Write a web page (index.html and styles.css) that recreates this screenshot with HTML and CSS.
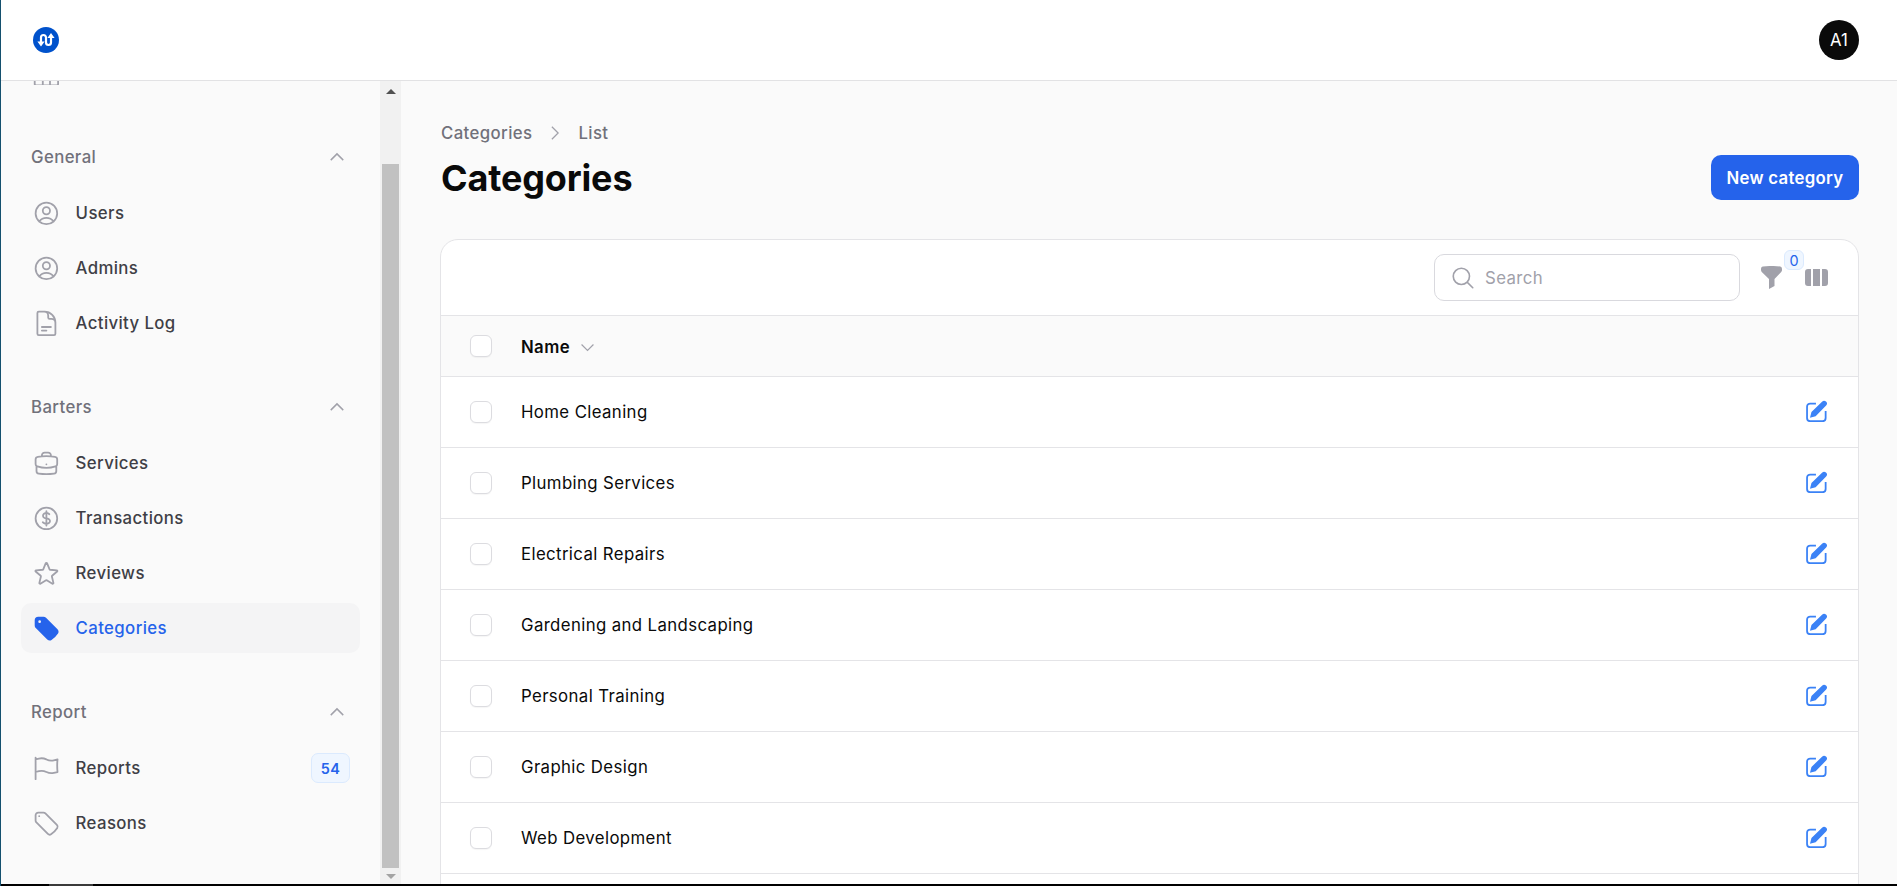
FILE: index.html
```html
<!DOCTYPE html>
<html lang="en">
<head>
  <meta charset="UTF-8" />
  <meta name="viewport" content="width=device-width, initial-scale=1.0" />
  <title>Categories</title>
  <link rel="stylesheet" href="styles.css">
</head>
<body>
  <svg class="sprite" aria-hidden="true">
    <symbol id="i-user" viewBox="0 0 24 24"><path d="M17.982 18.725A7.488 7.488 0 0 0 12 15.75a7.488 7.488 0 0 0-5.982 2.975m11.963 0a9 9 0 1 0-11.963 0m11.963 0A8.966 8.966 0 0 1 12 21a8.966 8.966 0 0 1-5.982-2.275M15 9.75a3 3 0 1 1-6 0 3 3 0 0 1 6 0Z"/></symbol>
    <symbol id="i-chevron" viewBox="0 0 24 24"><path d="m4.5 15.75 7.5-7.5 7.5 7.5"/></symbol>
    <symbol id="i-edit" viewBox="0 0 21 21">
      <path class="edit-box" d="M9.5 3.4H4a3 3 0 0 0-3 3v10.85a3 3 0 0 0 3 3h11.75a3 3 0 0 0 3-3V10.5"/>
      <path d="M3.8 17 5.2 11.4 15.3 1.6a2.6 2.6 0 0 1 3.9 3.7L9.2 15.4Z"/>
    </symbol>
  </svg>

  <div class="app">
    <header class="topbar">
      <svg class="logo" viewBox="0 0 26 26">
        <circle cx="13" cy="13" r="13" fill="#0052cc"/>
        <path d="M8 16V10.5a2.5 2.5 0 0 1 5 0v5a2.5 2.5 0 0 0 5 0V9.5" fill="none" stroke="#fff" stroke-width="2.2"/>
        <path d="M4.4 14.5h7.2L8 19.5ZM14.4 11h7.2L18 6Z" fill="#fff"/>
      </svg>
      <div class="avatar">A1</div>
    </header>

    <div class="layout">
      <aside class="sidebar">
        <nav class="sidenav">
          <div class="peek">
            <svg class="icon peek-icon" viewBox="0 0 24 24"><path d="M3.375 19.5h17.25c.621 0 1.125-.504 1.125-1.125v-3M2.25 15.375v3c0 .621.504 1.125 1.125 1.125M9 15v4.5M15 15v4.5"/></svg>
          </div>

          <div class="group">
            <div class="group-label">General
              <svg class="chevron"><use href="#i-chevron"/></svg>
            </div>
            <a class="item"><svg class="icon"><use href="#i-user"/></svg>Users</a>
            <a class="item"><svg class="icon"><use href="#i-user"/></svg>Admins</a>
            <a class="item">
              <svg class="icon" viewBox="0 0 24 24"><path d="M19.5 14.25v-2.625a3.375 3.375 0 0 0-3.375-3.375h-1.5A1.125 1.125 0 0 1 13.5 7.125v-1.5a3.375 3.375 0 0 0-3.375-3.375H8.25m0 12.75h7.5m-7.5 3H12M10.5 2.25H5.625c-.621 0-1.125.504-1.125 1.125v17.25c0 .621.504 1.125 1.125 1.125h12.75c.621 0 1.125-.504 1.125-1.125V11.25a9 9 0 0 0-9-9Z"/></svg>
              Activity Log
            </a>
          </div>

          <div class="group">
            <div class="group-label">Barters
              <svg class="chevron"><use href="#i-chevron"/></svg>
            </div>
            <a class="item">
              <svg class="icon" viewBox="0 0 24 24"><path d="M20.25 14.15v4.25c0 1.094-.787 2.036-1.872 2.18-2.087.277-4.216.42-6.378.42s-4.291-.143-6.378-.42c-1.085-.144-1.872-1.086-1.872-2.18v-4.25m16.5 0a2.18 2.18 0 0 0 .75-1.661V8.706c0-1.081-.768-2.015-1.837-2.175a48.114 48.114 0 0 0-3.413-.387m4.5 8.006c-.194.165-.42.295-.673.38A23.978 23.978 0 0 1 12 15.75c-2.648 0-5.195-.429-7.577-1.22a2.016 2.016 0 0 1-.673-.38m0 0A2.18 2.18 0 0 1 3 12.489V8.706c0-1.081.768-2.015 1.837-2.175a48.111 48.111 0 0 1 3.413-.387m7.5 0V5.25A2.25 2.25 0 0 0 13.5 3h-3a2.25 2.25 0 0 0-2.25 2.25v.894m7.5 0a48.667 48.667 0 0 0-7.5 0M12 12.75h.008v.008H12v-.008Z"/></svg>
              Services
            </a>
            <a class="item">
              <svg class="icon" viewBox="0 0 24 24"><path d="M12 6v12m-3-2.818.879.659c1.171.879 3.07.879 4.242 0 1.172-.879 1.172-2.303 0-3.182C13.536 12.219 12.768 12 12 12c-.725 0-1.45-.22-2.003-.659-1.106-.879-1.106-2.303 0-3.182s2.9-.879 4.006 0l.415.33M21 12a9 9 0 1 1-18 0 9 9 0 0 1 18 0Z"/></svg>
              Transactions
            </a>
            <a class="item">
              <svg class="icon" viewBox="0 0 24 24"><path d="M11.48 3.499a.562.562 0 0 1 1.04 0l2.125 5.111a.563.563 0 0 0 .475.345l5.518.442c.499.04.701.663.321.988l-4.204 3.602a.563.563 0 0 0-.182.557l1.285 5.385a.562.562 0 0 1-.84.61l-4.725-2.885a.562.562 0 0 0-.586 0L6.982 20.54a.562.562 0 0 1-.84-.61l1.285-5.386a.562.562 0 0 0-.182-.557l-4.204-3.602a.562.562 0 0 1 .321-.988l5.518-.442a.563.563 0 0 0 .475-.345L11.48 3.5Z"/></svg>
              Reviews
            </a>
            <a class="item active">
              <svg class="icon solid" viewBox="0 0 24 24"><path fill-rule="evenodd" clip-rule="evenodd" d="M5.25 2.25a3 3 0 0 0-3 3v4.318a3 3 0 0 0 .879 2.121l9.58 9.581c.92.92 2.39 1.186 3.548.428a18.849 18.849 0 0 0 5.441-5.44c.758-1.16.492-2.629-.428-3.548l-9.58-9.581a3 3 0 0 0-2.122-.879H5.25ZM6.375 7.5a1.125 1.125 0 1 0 0-2.25 1.125 1.125 0 0 0 0 2.25Z"/></svg>
              Categories
            </a>
          </div>

          <div class="group">
            <div class="group-label">Report
              <svg class="chevron"><use href="#i-chevron"/></svg>
            </div>
            <a class="item">
              <svg class="icon" viewBox="0 0 24 24"><path d="M3 3v1.5M3 21v-6m0 0 2.77-.693a9 9 0 0 1 6.208.682l.108.054a9 9 0 0 0 6.086.71l3.114-.732a48.524 48.524 0 0 1-.005-10.499l-3.11.732a9 9 0 0 1-6.085-.711l-.108-.054a9 9 0 0 0-6.208-.682L3 4.5M3 15V4.5"/></svg>
              Reports
              <span class="count">54</span>
            </a>
            <a class="item">
              <svg class="icon" viewBox="0 0 24 24"><path d="M9.568 3H5.25A2.25 2.25 0 0 0 3 5.25v4.318c0 .597.237 1.17.659 1.591l9.581 9.581c.699.699 1.78.872 2.607.33a18.095 18.095 0 0 0 5.223-5.223c.542-.827.369-1.908-.33-2.607L11.16 3.66A2.25 2.25 0 0 0 9.568 3Z"/><path d="M6 6h.008v.008H6V6Z"/></svg>
              Reasons
            </a>
          </div>
        </nav>

        <div class="scrollbar">
          <span class="arrow up"></span>
          <div class="thumb"></div>
          <span class="arrow down"></span>
        </div>
      </aside>

      <main class="content">
        <div class="breadcrumbs">
          <span>Categories</span>
          <svg class="crumb-sep" viewBox="0 0 24 24"><path d="m8.25 4.5 7.5 7.5-7.5 7.5"/></svg>
          <span>List</span>
        </div>

        <div class="page-head">
          <h1>Categories</h1>
          <a class="btn-primary">New category</a>
        </div>

        <section class="card">
          <div class="toolbar">
            <label class="search">
              <svg class="search-icon" viewBox="0 0 24 24"><path d="m21 21-5.197-5.197m0 0A7.5 7.5 0 1 0 5.196 5.196a7.5 7.5 0 0 0 10.607 10.607Z"/></svg>
              <input type="text" placeholder="Search">
            </label>
            <div class="filter">
              <svg class="filter-icon" viewBox="0 0 21 23"><path d="M2 .5C7-.2 14-.2 19 .5c1.4.2 2 1.3 2 2.5v1c0 1-.5 1.6-1 2.2L13.5 13v7L8 23V13L1 6.2C.4 5.6 0 5 0 4V3C0 1.8.6.7 2 .5Z"/></svg>
              <span class="filter-count">0</span>
            </div>
            <svg class="columns-icon" viewBox="0 0 23 17"><path d="M8 0h7v17H8ZM17 0h3a3 3 0 0 1 3 3v11a3 3 0 0 1-3 3h-3ZM3 0h3v17H3a3 3 0 0 1-3-3V3a3 3 0 0 1 3-3Z"/></svg>
          </div>

          <table class="grid">
            <thead>
              <tr>
                <th class="col-check"><span class="check"></span></th>
                <th>
                  <span class="sort">Name
                    <svg class="sort-icon" viewBox="0 0 24 24"><path d="m19.5 8.25-7.5 7.5-7.5-7.5"/></svg>
                  </span>
                </th>
                <th class="col-action"></th>
              </tr>
            </thead>
            <tbody>
              <tr><td class="col-check"><span class="check"></span></td><td>Home Cleaning</td><td class="col-action"><svg class="edit"><use href="#i-edit"/></svg></td></tr>
              <tr><td class="col-check"><span class="check"></span></td><td>Plumbing Services</td><td class="col-action"><svg class="edit"><use href="#i-edit"/></svg></td></tr>
              <tr><td class="col-check"><span class="check"></span></td><td>Electrical Repairs</td><td class="col-action"><svg class="edit"><use href="#i-edit"/></svg></td></tr>
              <tr><td class="col-check"><span class="check"></span></td><td>Gardening and Landscaping</td><td class="col-action"><svg class="edit"><use href="#i-edit"/></svg></td></tr>
              <tr><td class="col-check"><span class="check"></span></td><td>Personal Training</td><td class="col-action"><svg class="edit"><use href="#i-edit"/></svg></td></tr>
              <tr><td class="col-check"><span class="check"></span></td><td>Graphic Design</td><td class="col-action"><svg class="edit"><use href="#i-edit"/></svg></td></tr>
              <tr><td class="col-check"><span class="check"></span></td><td>Web Development</td><td class="col-action"><svg class="edit"><use href="#i-edit"/></svg></td></tr>
              <tr class="cut-off"><td class="col-check"></td><td></td><td class="col-action"></td></tr>
            </tbody>
          </table>
        </section>
      </main>
    </div>

    <div class="window-edge"><span></span></div>
  </div>
</body>
</html>
```

FILE: styles.css
```css
:root {
  --primary: #2563eb;
  --background: #fafafa;
  --line: #e4e4e7;
  --text: #0a0a0a;
  --nav-text: #3f3f46;
  --muted: #71717a;
  --icon: #a1a1aa;
}

* {
  box-sizing: border-box;
}

html, body {
  height: 100%;
}

body {
  margin: 0;
  overflow: hidden;
  font-family: Inter, "Noto Sans", sans-serif;
  font-size: 16.8px;
  letter-spacing: 0.38px;
  color: var(--text);
  background: var(--background);
}

.sprite {
  position: absolute;
  width: 0;
  height: 0;
}

.app {
  display: flex;
  flex-direction: column;
  height: 100vh;
  border-left: 1px solid #14506e;
}

/* top bar */

.topbar {
  flex: none;
  height: 81px;
  display: flex;
  align-items: center;
  justify-content: space-between;
  padding: 0 38px 0 32px;
  background: white;
  border-bottom: 1px solid #e2e2e4;
}

.logo {
  width: 26px;
  height: 26px;
}

.avatar {
  width: 40px;
  height: 40px;
  border-radius: 50%;
  display: flex;
  align-items: center;
  justify-content: center;
  background: #0a0a0a;
  color: white;
  letter-spacing: 0;
}

.layout {
  flex: 1;
  min-height: 0;
  display: flex;
}

/* sidebar */

.sidebar {
  flex: none;
  width: 400px;
  display: flex;
  background: var(--background);
}

.sidenav {
  flex: 1;
  padding: 0 20px;
  overflow: hidden;
}

.peek {
  height: 4px;
  margin-left: 10.6px;
  position: relative;
  overflow: hidden;
}

.peek-icon {
  position: absolute;
  left: 0;
  bottom: 0;
  margin-bottom: -5.4px;
}

.group {
  margin-top: 45px;
}

.peek + .group {
  margin-top: 58px;
}

.group-label {
  height: 30px;
  margin-bottom: 15px;
  padding: 0 13px 2px 10px;
  display: flex;
  align-items: center;
  justify-content: space-between;
  color: var(--muted);
  font-weight: 450;
}

.chevron {
  width: 20px;
  height: 20px;
  fill: none;
  stroke: var(--icon);
  stroke-width: 1.7;
}

.item {
  height: 50px;
  margin-bottom: 5px;
  padding: 0 10px 0 10.6px;
  display: flex;
  align-items: center;
  gap: 15.2px;
  border-radius: 10px;
  color: var(--nav-text);
  font-weight: 450;
}

.item:last-child {
  margin-bottom: 0;
}

.item.active {
  background: #f4f4f5;
  color: var(--primary);
}

.icon {
  flex: none;
  width: 28.8px;
  height: 28.8px;
  fill: none;
  stroke: var(--icon);
  stroke-width: 1.5;
  stroke-linecap: round;
  stroke-linejoin: round;
}

.icon.solid {
  fill: var(--primary);
  stroke: none;
}

.count {
  margin-left: auto;
  width: 39px;
  height: 30px;
  display: flex;
  align-items: center;
  justify-content: center;
  border: 1px solid #dbeafe;
  border-radius: 7px;
  background: #eff6ff;
  color: var(--primary);
  font-size: 14.4px;
  font-weight: 600;
}

/* the window's own scrollbar, left where the screenshot caught it */

.scrollbar {
  flex: none;
  width: 21px;
  background: #f1f1f1;
  display: flex;
  flex-direction: column;
  align-items: center;
}

.arrow {
  flex: none;
  width: 0;
  height: 0;
  border-left: 5px solid transparent;
  border-right: 5px solid transparent;
}

.arrow.up {
  margin-top: 8px;
  border-bottom: 5px solid #505050;
}

.arrow.down {
  margin: 6px 0 5px;
  border-top: 5px solid #a3a3a3;
}

.thumb {
  flex: 1;
  width: 17px;
  margin-top: 70px;
  background: #c1c1c1;
}

/* main area */

.content {
  flex: 1;
  min-width: 0;
  padding: 40px 38px 0 40px;
  overflow: hidden;
}

.breadcrumbs {
  height: 24px;
  display: flex;
  align-items: center;
  gap: 13px;
  color: var(--muted);
  font-weight: 450;
}

.crumb-sep {
  width: 20px;
  height: 20px;
  fill: none;
  stroke: var(--icon);
  stroke-width: 1.5;
}

.page-head {
  margin-top: 10px;
  display: flex;
  align-items: flex-end;
  justify-content: space-between;
}

h1 {
  margin: 0;
  font-size: 36px;
  line-height: 44px;
  font-weight: 700;
  letter-spacing: -0.15px;
}

.btn-primary {
  height: 45px;
  padding: 0 15.5px;
  display: flex;
  align-items: center;
  border-radius: 10px;
  background: var(--primary);
  color: white;
  font-weight: 600;
  letter-spacing: 0.3px;
}

.card {
  margin: 39px 0 0 -1px;
  background: white;
  border: 1px solid var(--line);
  border-radius: 18px 18px 0 0;
}

.toolbar {
  height: 75px;
  padding-right: 30px;
  display: flex;
  align-items: center;
  justify-content: flex-end;
}

.search {
  width: 306px;
  height: 47px;
  padding: 0 14px 0 15px;
  display: flex;
  align-items: center;
  gap: 9px;
  border: 1px solid #d9d9de;
  border-radius: 10px;
}

.search-icon {
  flex: none;
  width: 26px;
  height: 26px;
  fill: none;
  stroke: var(--icon);
  stroke-width: 1.5;
  stroke-linecap: round;
  stroke-linejoin: round;
}

.search input {
  flex: 1;
  min-width: 0;
  border: none;
  outline: none;
  padding: 0;
  font: inherit;
  letter-spacing: inherit;
  background: transparent;
}

.search input::placeholder {
  color: var(--icon);
}

.filter {
  margin-left: 21px;
  position: relative;
  display: flex;
}

.filter-icon {
  width: 21px;
  height: 23px;
  margin: 0 23px 0 0;
  fill: var(--icon);
}

.filter-count {
  position: absolute;
  top: -16px;
  left: 23px;
  width: 20px;
  height: 20px;
  display: flex;
  align-items: center;
  justify-content: center;
  border: 1px solid #dbeafe;
  border-radius: 6px;
  background: #eff6ff;
  color: var(--primary);
  font-size: 14.4px;
  letter-spacing: 0;
}

.columns-icon {
  width: 23px;
  height: 17px;
  fill: var(--icon);
}

.grid {
  width: 100%;
  border-collapse: collapse;
}

.grid th,
.grid td {
  padding: 0;
  border-top: 1px solid var(--line);
  text-align: left;
}

.grid th {
  height: 61px;
  background: var(--background);
  font-weight: 600;
}

.grid td {
  height: 71px;
}

.col-check {
  width: 80px;
  padding-left: 29px !important;
}

.col-action {
  width: 60px;
  text-align: right !important;
  padding: 0 30px 2px 0 !important;
}

.check {
  display: block;
  width: 22px;
  height: 22px;
  border: 1px solid #dcdce0;
  border-radius: 6px;
  background: white;
  box-shadow: 0 1px 1px rgba(0,0,0,0.04);
}

.sort {
  display: inline-flex;
  align-items: center;
  gap: 8px;
  padding-top: 2px;
}

.sort-icon {
  width: 19px;
  height: 19px;
  fill: none;
  stroke: var(--icon);
  stroke-width: 1.5;
}

.edit {
  display: block;
  margin-left: auto;
  width: 22px;
  height: 22px;
  fill: #3b82f6;
}

.edit-box {
  fill: none;
  stroke: #3b82f6;
  stroke-width: 1.7;
}

.window-edge {
  flex: none;
  height: 2px;
  background: #000;
}

.window-edge span {
  display: block;
  width: 44px;
  height: 2px;
  margin-left: 48px;
  background: #3a3a3a;
}
```
